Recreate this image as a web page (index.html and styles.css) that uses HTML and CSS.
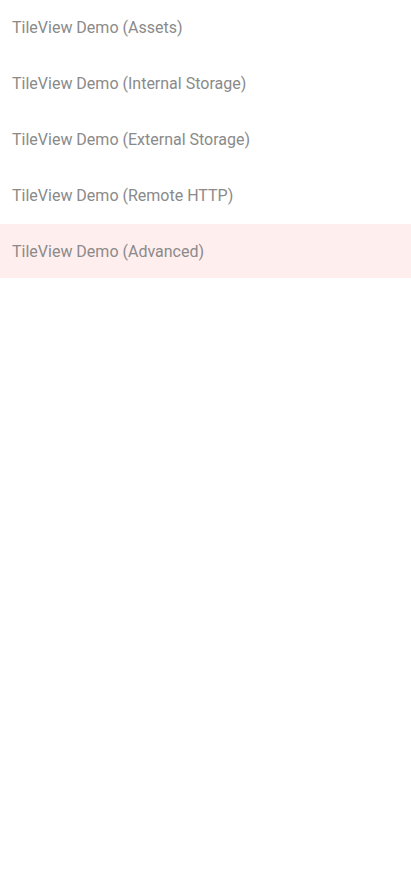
FILE: index.html
```html
<!DOCTYPE html>
<html>
<head>
<meta charset="utf-8">
<link rel="stylesheet" href="styles.css">
</head>
<body>
<ul class="list">
  <li class="item">TileView Demo (Assets)</li>
  <li class="item">TileView Demo (Internal Storage)</li>
  <li class="item">TileView Demo (External Storage)</li>
  <li class="item">TileView Demo (Remote HTTP)</li>
  <li class="item selected">TileView Demo (Advanced)</li>
</ul>
</body>
</html>
```
FILE: styles.css
```css
html, body { margin: 0; padding: 0; background: #fff; }
.list { list-style: none; margin: 0; padding: 0; }
.item {
  box-sizing: border-box;
  height: 56px;
  display: flex;
  align-items: center;
  padding-left: 12px;
  border-bottom: 2px solid transparent;
  background-clip: padding-box;
  font-family: Roboto, sans-serif;
  font-size: 16px;
  color: #8a8a8a;
}
.selected { background-color: #ffeeee; }
```
